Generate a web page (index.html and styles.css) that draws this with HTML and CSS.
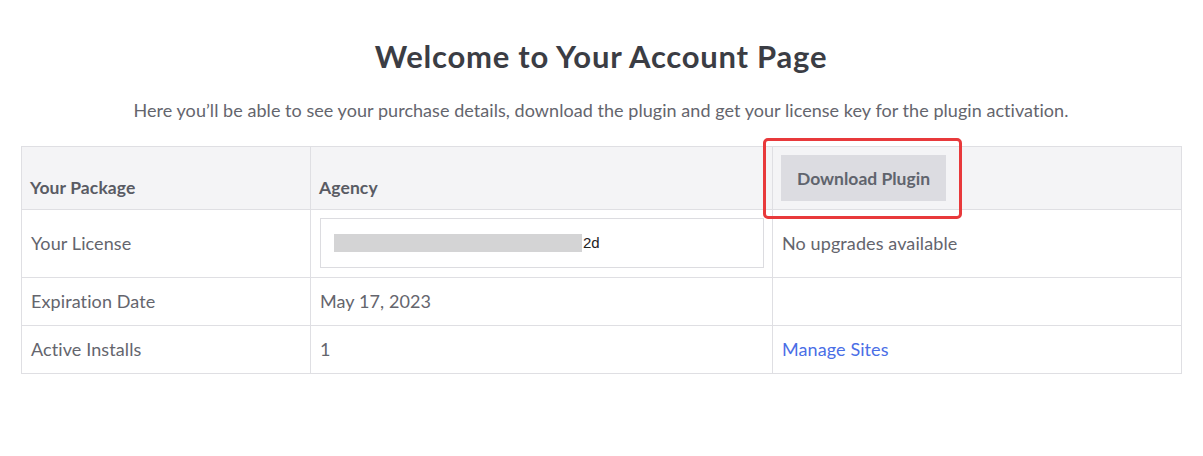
FILE: index.html
```html
<!DOCTYPE html>
<html lang="en">
<head>
<meta charset="utf-8">
<title>Account Page</title>
<link rel="stylesheet" href="styles.css">
</head>
<body>
<main class="page">
  <h1 class="title">Welcome to Your Account Page</h1>
  <p class="lead">Here you’ll be able to see your purchase details, download the plugin and get your license key for the plugin activation.</p>
  <table class="account">
    <colgroup>
      <col class="c1">
      <col class="c2">
      <col class="c3">
    </colgroup>
    <thead>
      <tr>
        <th>Your Package</th>
        <th>Agency</th>
        <th class="btn-cell">
          <span class="btn-wrap">
            <button class="btn" type="button">Download Plugin</button>
            <span class="highlight"></span>
          </span>
        </th>
      </tr>
    </thead>
    <tbody>
      <tr>
        <td>Your License</td>
        <td>
          <div class="license"><span class="mask"></span><span class="key">2d</span></div>
        </td>
        <td>No upgrades available</td>
      </tr>
      <tr>
        <td>Expiration Date</td>
        <td>May 17, 2023</td>
        <td></td>
      </tr>
      <tr>
        <td>Active Installs</td>
        <td>1</td>
        <td><a class="link" href="#">Manage Sites</a></td>
      </tr>
    </tbody>
  </table>
</main>
</body>
</html>
```

FILE: styles.css
```css
html, body {
  margin: 0;
  padding: 0;
  background: #ffffff;
}

body {
  font-family: Lato, "Open Sans", Arial, sans-serif;
  color: #64656d;
  padding: 0 22px 0 21px;
}

.page {
  width: 1160px;
  padding-top: 35px;
}

.title {
  margin: 0;
  text-align: center;
  font-size: 31px;
  letter-spacing: 0.75px;
  line-height: 42px;
  font-weight: 700;
  color: #3b3d44;
}

.lead {
  margin: 21px 0 24px;
  text-align: center;
  font-size: 18px;
  letter-spacing: 0.05px;
  line-height: 24px;
  color: #64656d;
}

.account {
  width: 1160px;
  border-collapse: collapse;
  table-layout: fixed;
  font-size: 18px;
  letter-spacing: 0.1px;
}

.c1 { width: 289px; }
.c2 { width: 462px; }
.c3 { width: 409px; }

.account th,
.account td {
  border: 1px solid #dfdfe3;
  padding: 8px 8px 9px 9px;
  text-align: left;
  line-height: 30px;
}

.account th {
  background: #f4f4f6;
  font-weight: 700;
  font-size: 17.5px;
  color: #595b64;
  vertical-align: bottom;
  line-height: 24px;
  padding-bottom: 9px;
  padding-left: 8px;
}

.account td {
  vertical-align: middle;
}

.account th.btn-cell {
  padding: 8px;
  vertical-align: top;
}

.btn-wrap {
  position: relative;
  display: inline-block;
}

.btn {
  display: block;
  border: 0;
  margin: 0;
  background: #dcdce1;
  color: #60646d;
  font-family: Lato, "Open Sans", Arial, sans-serif;
  font-size: 17.5px;
  font-weight: 700;
  height: 46px;
  padding: 0;
  width: 165px;
}

.highlight {
  position: absolute;
  top: -17px;
  left: -18px;
  right: -16px;
  bottom: -18px;
  border: 3px solid #e8393b;
  border-radius: 5px;
}

.license {
  display: flex;
  align-items: center;
  box-sizing: border-box;
  height: 50px;
  border: 1px solid #dcdce0;
  padding: 0 13px;
}

.mask {
  display: inline-block;
  width: 248px;
  height: 18px;
  background: #d4d4d5;
}

.key {
  font-family: Arial, "Liberation Sans", sans-serif;
  font-size: 15px;
  letter-spacing: 0;
  color: #222222;
  line-height: 18px;
  padding-left: 1px;
}

.link {
  color: #4a6ee6;
  text-decoration: none;
}
```
